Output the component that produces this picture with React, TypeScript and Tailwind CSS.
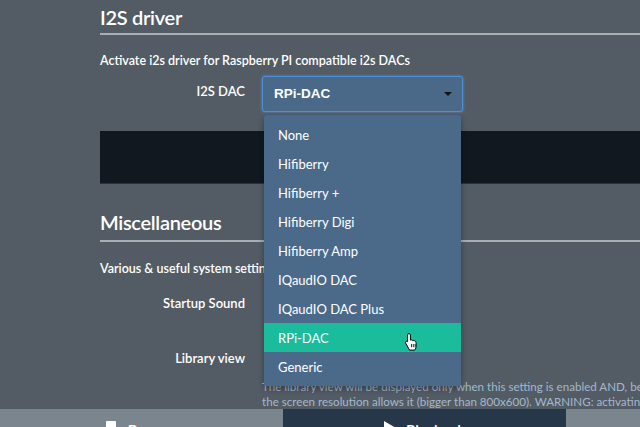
import React from "react";

const items = [
  "None",
  "Hifiberry",
  "Hifiberry +",
  "Hifiberry Digi",
  "Hifiberry Amp",
  "IQaudIO DAC",
  "IQaudIO DAC Plus",
  "RPi-DAC",
  "Generic",
];

function Cursor() {
  return (
    <svg width="16" height="20" viewBox="0 0 16 20" className="absolute left-[140px] top-[9px]">
      <path
        d="M5 1.5C5.8 1.5 6.4 2.1 6.4 2.9V8.1L6.7 8C7.3 7.7 8 8 8.3 8.5C8.8 8.2 9.5 8.3 9.9 8.8C10.4 8.5 11.2 8.7 11.5 9.3L11.7 9.7C12 10.2 12.1 10.7 12.1 11.3V14.5C12.1 15.5 11.8 16.4 11.3 17.2L10.7 18.1H5.6L4.5 16.3L1.6 11C1.2 10.4 1.4 9.7 2 9.4C2.5 9.1 3.2 9.2 3.6 9.7V2.9C3.6 2.1 4.2 1.5 5 1.5Z"
        fill="#fff"
        stroke="#000"
        strokeWidth="1"
        strokeLinejoin="round"
      />
      <path d="M7.5 12V15.2M9.3 12V15.2M11.1 12V15.2" stroke="#000" strokeWidth="0.8" />
    </svg>
  );
}

export default function App() {
  return (
    <div
      className="relative h-[427px] w-[640px] overflow-hidden bg-[#535c65] text-white"
      style={{ fontFamily: "Lato, 'Open Sans', sans-serif" }}
    >
      <div className="flex h-[409px] flex-col pl-[100px]">
        {/* I2S driver */}
        <h2 className="mt-[7px] text-[20px] leading-[21px] font-semibold tracking-[-0.3px]">I2S driver</h2>
        <div className="mt-[5px] h-[2px] bg-[#a9aeb3]" />
        <p className="mt-[18px] text-[12.5px] leading-[16px] font-semibold">
          Activate i2s driver for Raspberry PI compatible i2s DACs
        </p>
        <div className="mt-[7px] flex items-start">
          <div className="w-[145px] pt-[7px] text-right text-[13px] font-semibold leading-[16px]">I2S DAC</div>
          <div className="ml-[17px] flex h-[36px] w-[201px] items-center justify-between rounded-[3px] border border-[#4f8fd6] bg-[#4a6888] pl-[11px] pr-[10px] shadow-[0_0_3px_#4f8fd6]">
            <span className="text-[13.5px] font-bold" style={{ fontFamily: "'Liberation Sans', Arial, sans-serif" }}>
              RPi-DAC
            </span>
            <span className="h-0 w-0 border-x-[4px] border-t-[4px] border-x-transparent border-t-[#111]" />
          </div>
        </div>
        <div className="mt-[19px] h-[59px] bg-[#111820] border-b border-[#2a323b]" />

        {/* Miscellaneous */}
        <h2 className="mt-[28px] text-[20px] leading-[21px] font-semibold tracking-[-0.3px]">Miscellaneous</h2>
        <div className="mt-[7px] h-[2px] bg-[#a9aeb3]" />
        <p className="mt-[19px] text-[12.5px] leading-[16px] font-semibold whitespace-nowrap">
          Various &amp; useful system settings
        </p>
        <div className="mt-[18px] flex">
          <div className="w-[145px] text-right text-[13px] font-semibold leading-[16px]">Startup Sound</div>
        </div>
        <div className="mt-[39px] flex">
          <div className="w-[145px] text-right text-[13px] font-semibold leading-[16px]">Library view</div>
        </div>
        <div className="ml-[162px] mt-[13px] whitespace-nowrap text-[11.6px] leading-[15px] text-[#a3b8cc]">
          <div>The library view will be displayed only when this setting is enabled AND, be</div>
          <div>the screen resolution allows it (bigger than 800x600). WARNING: activating</div>
        </div>
      </div>

      {/* Bottom bar */}
      <div className="flex h-[50px]">
        <div className="flex w-[283px] items-start justify-center bg-[#7b858e] pt-[10px]">
          <span className="mr-[12px] mt-[2px] inline-block h-[14px] w-[10px] rounded-[1px] bg-white" />
          <span className="text-[15px] font-semibold">Browse</span>
        </div>
        <div className="flex w-[283px] items-start justify-center bg-[#263749] pt-[10px]">
          <span className="mr-[10px] mt-[2px] h-0 w-0 border-y-[7px] border-l-[12px] border-y-transparent border-l-white" />
          <span className="text-[15px] font-semibold">Playback</span>
        </div>
        <div className="flex-1 bg-[#7b858e]" />
      </div>

      {/* Dropdown menu overlay */}
      <div className="absolute left-[264px] top-[115px] w-[197px] rounded-[3px] bg-[#4b6a8a] py-[5px] shadow-[0_3px_6px_rgba(0,0,0,0.35)]">
        {items.map((it) => (
          <div
            key={it}
            className={
              "relative flex h-[29px] items-center pl-[14px] text-[13px] leading-[16px] " +
              (it === "RPi-DAC" ? "bg-[#1abc9c]" : "")
            }
          >
            {it}
            {it === "RPi-DAC" && <Cursor />}
          </div>
        ))}
      </div>
    </div>
  );
}
